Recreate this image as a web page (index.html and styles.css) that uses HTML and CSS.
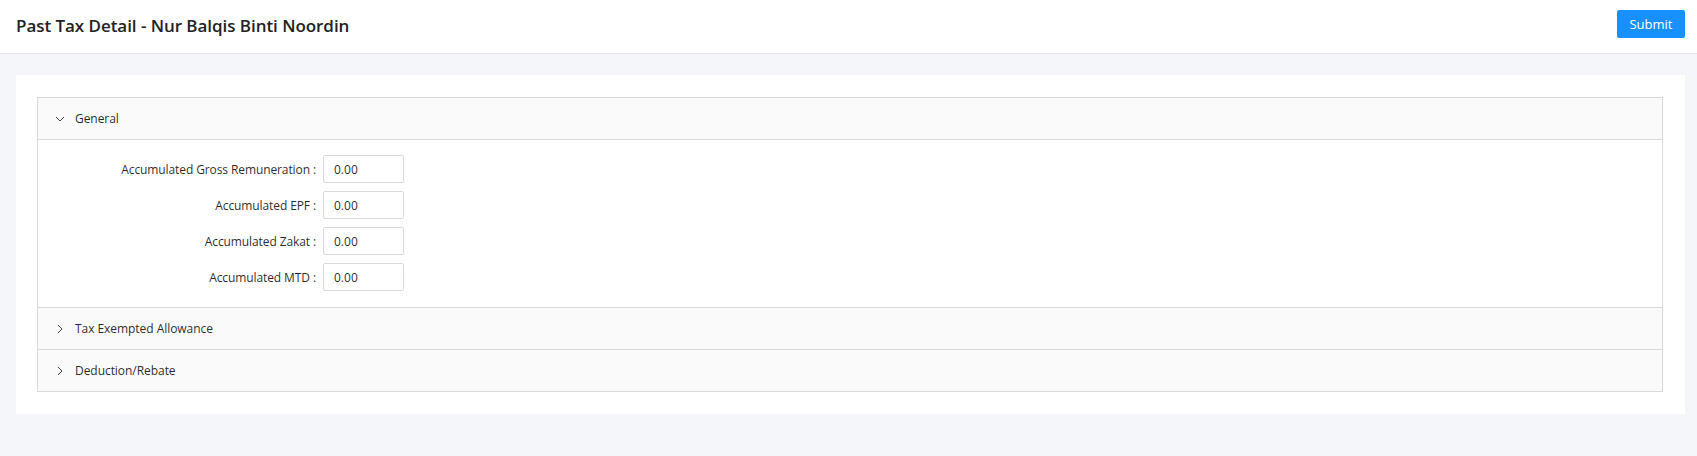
FILE: index.html
```html
<!DOCTYPE html>
<html>
<head>
<meta charset="utf-8">
<link rel="stylesheet" href="styles.css">
</head>
<body>
<header class="topbar">
  <h1 class="title">Past Tax Detail - Nur Balqis Binti Noordin</h1>
  <button class="btn-primary">Submit</button>
</header>
<main class="page">
  <section class="card">
    <div class="collapse">
      <div class="panel">
        <div class="panel-header">
          <svg class="arrow" viewBox="0 0 10 10" width="10" height="10"><path d="M1 3 L5 7 L9 3" fill="none" stroke="#444" stroke-width="1"/></svg>
          <span>General</span>
        </div>
        <div class="panel-body">
          <div class="form-row"><label>Accumulated Gross Remuneration :</label><input class="field" value="0.00"></div>
          <div class="form-row"><label>Accumulated EPF :</label><input class="field" value="0.00"></div>
          <div class="form-row"><label>Accumulated Zakat :</label><input class="field" value="0.00"></div>
          <div class="form-row"><label>Accumulated MTD :</label><input class="field" value="0.00"></div>
        </div>
      </div>
      <div class="panel">
        <div class="panel-header">
          <svg class="arrow" viewBox="0 0 10 10" width="10" height="10"><path d="M3 1 L7 5 L3 9" fill="none" stroke="#444" stroke-width="1"/></svg>
          <span>Tax Exempted Allowance</span>
        </div>
      </div>
      <div class="panel">
        <div class="panel-header">
          <svg class="arrow" viewBox="0 0 10 10" width="10" height="10"><path d="M3 1 L7 5 L3 9" fill="none" stroke="#444" stroke-width="1"/></svg>
          <span>Deduction/Rebate</span>
        </div>
      </div>
    </div>
  </section>
</main>
</body>
</html>
```
FILE: styles.css
```css
* { box-sizing: border-box; }
html, body { margin: 0; padding: 0; }
body {
  font-family: "Open Sans", "Noto Sans", sans-serif;
  background: #f5f6fa;
  color: rgba(0,0,0,0.85);
  width: 1697px;
  height: 456px;
  overflow: hidden;
}
.topbar {
  height: 54px;
  background: #fff;
  border-bottom: 1px solid #e8e4e6;
  display: flex;
  align-items: center;
  justify-content: space-between;
  padding: 0 12px 0 16px;
}
.title {
  margin: 0;
  font-size: 17px;
  font-weight: 600;
  color: #222;
  letter-spacing: -0.05px;
  position: relative;
  top: -1px;
}
.btn-primary {
  width: 68px;
  height: 28px;
  background: #1890ff;
  border: 1px solid #1890ff;
  border-radius: 2px;
  color: #fff;
  font-family: inherit;
  font-size: 13px;
  padding: 0;
  position: relative;
  top: -3px;
}
.page {
  padding: 21px 12px 0 16px;
}
.card {
  background: #fff;
  padding: 22px 22px 22px 21px;
}
.collapse {
  border: 1px solid #d9d9d9;
  border-bottom: 0;
  background: #fafafa;
}
.panel { border-bottom: 1px solid #d9d9d9; }
.panel-header {
  height: 41px;
  display: flex;
  align-items: center;
  padding-left: 17px;
  font-size: 12px;
  color: rgba(0,0,0,0.85);
  letter-spacing: -0.05px;
}
.arrow { margin-right: 10px; }
.panel-body {
  background: #fff;
  border-top: 1px solid #d9d9d9;
  padding: 15px 0 16px;
  display: flex;
  flex-direction: column;
  gap: 8px;
}
.form-row {
  display: flex;
  align-items: center;
}
.form-row label {
  width: 285px;
  text-align: right;
  font-size: 12px;
  letter-spacing: -0.1px;
  padding-right: 7px;
  color: rgba(0,0,0,0.85);
}
.field {
  width: 81px;
  height: 28px;
  border: 1px solid #d9d9d9;
  border-radius: 2px;
  padding: 0 10px;
  font-family: inherit;
  font-size: 12px;
  color: rgba(0,0,0,0.85);
}
```
